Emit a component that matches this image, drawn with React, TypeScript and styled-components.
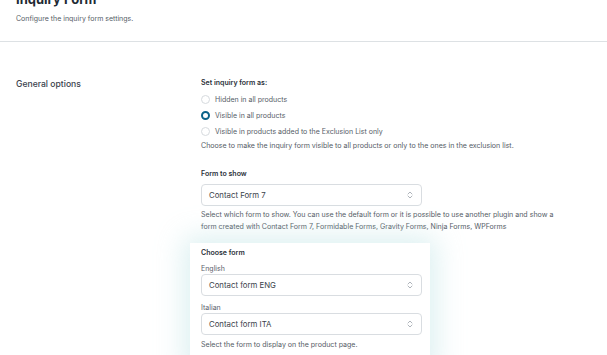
import styled, { createGlobalStyle } from 'styled-components';

const GlobalStyle = createGlobalStyle`
  html, body {
    margin: 0;
    padding: 0;
    background: #ffffff;
    overflow: hidden;
  }
  body {
    font-family: Inter, "Noto Sans", sans-serif;
    color: #555c66;
  }
`;

const Page = styled.div`
  width: 607px;
  height: 355px;
  overflow: hidden;
`;

const Header = styled.header`
  padding: 0 16px;
  margin-top: -9px;
  height: 51px;
  border-bottom: 1px solid #dde1e4;
  box-sizing: border-box;
`;

const Title = styled.h1`
  margin: 0;
  font-size: 13px;
  line-height: 16px;
  font-weight: 700;
  color: #222a33;
`;

const Subtitle = styled.p`
  margin: 7px 0 0;
  font-size: 7px;
  line-height: 10px;
  color: #555c66;
`;

const Section = styled.section`
  display: grid;
  grid-template-columns: 185px 1fr;
  padding: 36px 0 0 16px;
`;

const SectionTitle = styled.h2`
  margin: 0;
  font-size: 8.6px;
  line-height: 12px;
  font-weight: 500;
  color: #3a424d;
`;

const Fields = styled.div`
  display: flex;
  flex-direction: column;
  width: 362px;
`;

const Field = styled.div<{ $gap?: number }>`
  display: flex;
  flex-direction: column;
  margin-bottom: ${(p) => p.$gap ?? 0}px;
`;

const Label = styled.div`
  font-size: 7px;
  line-height: 10px;
  font-weight: 600;
  color: #2b3139;
  margin-bottom: 5px;
`;

const SubLabel = styled.div<{ $top?: number }>`
  font-size: 7px;
  line-height: 10px;
  color: #5a616b;
  margin-top: ${(p) => p.$top ?? 0}px;
`;

const RadioList = styled.div`
  display: flex;
  flex-direction: column;
  gap: 6px;
  margin-top: 1px;
`;

const RadioRow = styled.label`
  display: flex;
  align-items: center;
  gap: 5px;
  height: 10px;
  font-size: 7px;
  color: #555c66;
`;

const RadioDot = styled.span<{ $checked?: boolean }>`
  width: 9px;
  height: 9px;
  border-radius: 50%;
  box-sizing: border-box;
  background: #ffffff;
  border: ${(p) => (p.$checked ? '2.6px solid #0b6389' : '1px solid #d6dade')};
  flex: none;
`;

const Help = styled.p<{ $top?: number }>`
  margin: ${(p) => p.$top ?? 4}px 0 0;
  font-size: 7.05px;
  line-height: 12px;
  color: #555c66;
`;

const SelectBox = styled.div`
  width: 221px;
  height: 22px;
  box-sizing: border-box;
  border: 1px solid #d9dde1;
  border-radius: 4px;
  background: #ffffff;
  display: flex;
  align-items: center;
  justify-content: space-between;
  padding: 0 8px 0 7px;
  font-size: 7.8px;
  color: #3a414a;
`;

const Panel = styled.div`
  margin: 10px 0 0 -11px;
  width: 240px;
  box-sizing: border-box;
  padding: 5px 11px 20px;
  background: #ffffff;
  box-shadow: 0 0 26px 6px rgba(178, 222, 224, 0.45);
`;

const PanelLabel = styled(Label)`
  margin-bottom: 6px;
`;

const Chevrons = () => (
  <svg width="6" height="8" viewBox="0 0 6 8" fill="none">
    <path d="M1 3 L3 1 L5 3" stroke="#9aa1a9" strokeWidth="0.8" strokeLinecap="round" strokeLinejoin="round" />
    <path d="M1 5 L3 7 L5 5" stroke="#9aa1a9" strokeWidth="0.8" strokeLinecap="round" strokeLinejoin="round" />
  </svg>
);

const Select = ({ value }: { value: string }) => (
  <SelectBox>
    <span>{value}</span>
    <Chevrons />
  </SelectBox>
);

const options = [
  { label: 'Hidden in all products', checked: false },
  { label: 'Visible in all products', checked: true },
  { label: 'Visible in products added to the Exclusion List only', checked: false },
];

export default function App() {
  return (
    <Page>
      <GlobalStyle />
      <Header>
        <Title>Inquiry Form</Title>
        <Subtitle>Configure the inquiry form settings.</Subtitle>
      </Header>
      <Section>
        <SectionTitle>General options</SectionTitle>
        <Fields>
          <Field $gap={17}>
            <Label>Set inquiry form as:</Label>
            <RadioList>
              {options.map((o) => (
                <RadioRow key={o.label}>
                  <RadioDot $checked={o.checked} />
                  {o.label}
                </RadioRow>
              ))}
            </RadioList>
            <Help $top={4}>Choose to make the inquiry form visible to all products or only to the ones in the exclusion list.</Help>
          </Field>
          <Field>
            <Label>Form to show</Label>
            <Select value="Contact Form 7" />
            <Help $top={3}>
              Select which form to show. You can use the default form or it is possible to use another plugin and show a
              form created with Contact Form 7, Formidable Forms, Gravity Forms, Ninja Forms, WPForms
            </Help>
          </Field>
          <Panel>
            <PanelLabel>Choose form</PanelLabel>
            <SubLabel>English</SubLabel>
            <Select value="Contact form ENG" />
            <SubLabel $top={7}>Italian</SubLabel>
            <Select value="Contact form ITA" />
            <Help $top={4}>Select the form to display on the product page.</Help>
          </Panel>
        </Fields>
      </Section>
    </Page>
  );
}
